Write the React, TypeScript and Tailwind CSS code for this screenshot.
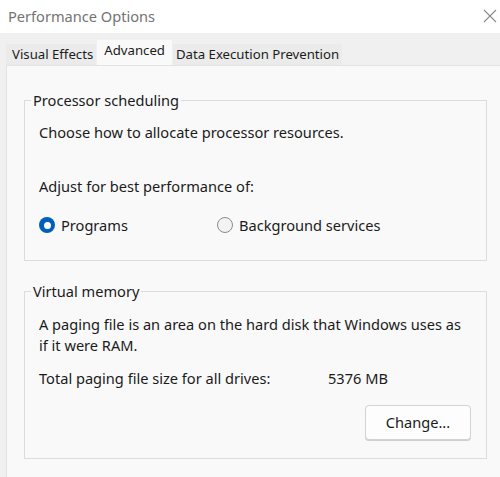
const font = { fontFamily: '"Noto Sans", "Open Sans", sans-serif' }

function Radio({ checked, label }: { checked?: boolean; label: string }) {
  return (
    <label className="flex items-center gap-[6px]">
      {checked ? (
        <span className="flex h-[16px] w-[16px] items-center justify-center rounded-full bg-[#005fb8]">
          <span className="h-[7px] w-[7px] rounded-full bg-white" />
        </span>
      ) : (
        <span className="h-[16px] w-[16px] rounded-full border border-[#8b8b8b] bg-[#f3f3f3]" />
      )}
      <span>{label}</span>
    </label>
  )
}

function GroupBox({ title, children }: { title: string; children: React.ReactNode }) {
  return (
    <fieldset className="border border-[#dcdcdc] pl-[6px] pr-[15px]">
      <legend className="px-[2px] leading-[20px] text-[#1b1b1b]">{title}</legend>
      <div className="pl-[8px]">{children}</div>
    </fieldset>
  )
}

export default function App() {
  return (
    <div
      className="flex h-[477px] w-[500px] flex-col overflow-hidden bg-white text-[14.6px] text-[#1b1b1b]"
      style={font}
    >
      {/* title bar */}
      <div className="flex h-[33px] items-center justify-between pl-[8px] pr-[3px]">
        <span className="text-[14.6px] text-[#737373]">Performance Options</span>
        <svg width="14" height="14" viewBox="0 0 14 14" className="mb-[1px]">
          <path d="M1 1 L13 13 M13 1 L1 13" stroke="#8a8a8a" strokeWidth="1.1" />
        </svg>
      </div>

      {/* tab strip */}
      <div className="flex flex-1 flex-col bg-[#f0f0f0] pl-[6px]">
        <div className="flex h-[32px] items-end text-[13.2px]">
          <div className="flex h-[21px] items-center bg-[#ebebeb] pl-[6px] pr-[3px]">Visual Effects</div>
          <div className="ml-[1px] flex h-[25px] items-center bg-[#f9f9f9] px-[7px] pb-[3px]">Advanced</div>
          <div className="ml-[1px] flex h-[21px] items-center bg-[#ebebeb] px-[3px]">
            Data Execution Prevention
          </div>
        </div>

        {/* panel */}
        <div className="flex flex-1 flex-col border-l border-t border-[#e3e3e3] bg-[#f9f9f9] pl-[17px] pr-[13px] pt-[24px]">
          <GroupBox title="Processor scheduling">
            <div className="pt-[12px] leading-[20px]">Choose how to allocate processor resources.</div>
            <div className="pt-[34px] leading-[20px]">Adjust for best performance of:</div>
            <div className="flex pb-[25px] pt-[19px] leading-[20px]">
              <div className="w-[178px]">
                <Radio checked label="Programs" />
              </div>
              <Radio label="Background services" />
            </div>
          </GroupBox>

          <div className="h-[20px]" />

          <GroupBox title="Virtual memory">
            <div className="pt-[13px] leading-[21px]">
              A paging file is an area on the hard disk that Windows uses as if it were RAM.
            </div>
            <div className="flex pt-[12px] leading-[20px]">
              <span className="w-[289px]">Total paging file size for all drives:</span>
              <span>5376 MB</span>
            </div>
            <div className="flex justify-end pb-[18px] pt-[17px]">
              <button className="h-[35px] w-[106px] rounded-[4px] border border-[#d3d3d3] bg-[#fdfdfd] text-[14.6px] shadow-[0_1px_0_#cfcfcf]">
                Change...
              </button>
            </div>
          </GroupBox>
        </div>
      </div>
    </div>
  )
}
